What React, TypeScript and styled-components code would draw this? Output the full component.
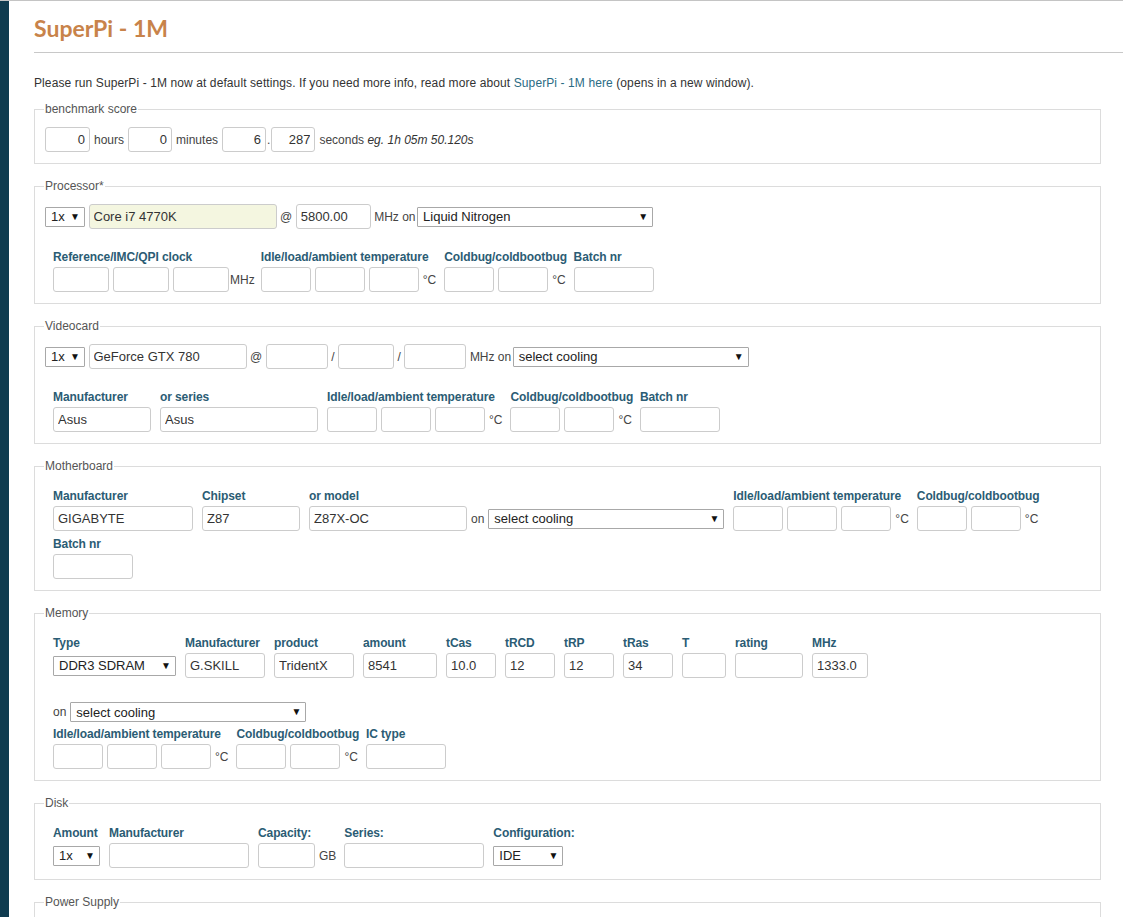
import React from 'react';
import styled, { createGlobalStyle } from 'styled-components';

const GlobalStyle = createGlobalStyle`
  html, body { margin: 0; padding: 0; background: #fff; }
  body {
    font-family: "Liberation Sans", Arial, sans-serif;
    font-size: 12px;
    color: #333;
  }
  * { box-sizing: border-box; }
`;

const Page = styled.div`
  display: flex;
  min-height: 917px;
  border-top: 1px solid #c4c4c4;
`;

const SideBar = styled.div`
  flex: 0 0 9px;
  background: #0f3b4f;
`;

const Main = styled.main`
  flex: 1;
  min-width: 0;
  padding-left: 25px;
`;

const Title = styled.h1`
  margin: 0;
  padding: 14px 0 11px;
  font-family: Lato, "Open Sans", sans-serif;
  font-weight: 700;
  font-size: 23px;
  line-height: 26px;
  color: #c8834a;
  border-bottom: 1px solid #c8c8c8;
`;

const Content = styled.div`
  margin-right: 22px;
`;

const Intro = styled.p`
  margin: 22px 0 11px;
  font-size: 12px;
  line-height: 16px;
  letter-spacing: 0.1px;
  color: #333;
`;

const Link = styled.a`
  color: #2a6b84;
  text-decoration: none;
`;

const Fieldset = styled.fieldset<{ $minH?: number }>`
  margin: 0 0 15px;
  padding: 11px 10px 11px;
  border: 1px solid #dcdcdc;
  min-width: 0;
  min-height: ${(p) => p.$minH ?? 0}px;
`;

const Legend = styled.legend`
  margin-left: -1px;
  padding: 0 1px;
  font-size: 12px;
  line-height: 14px;
  color: #555;
`;

const InlineRow = styled.div<{ $indent?: number; $mt?: number; $h?: number; $gap?: number }>`
  display: flex;
  align-items: center;
  gap: ${(p) => p.$gap ?? 3.5}px;
  height: ${(p) => p.$h ?? 25}px;
  padding-left: ${(p) => p.$indent ?? 0}px;
  margin-top: ${(p) => p.$mt ?? 0}px;
`;

const FieldRow = styled.div<{ $mt?: number }>`
  display: flex;
  align-items: flex-start;
  gap: 9px;
  padding-left: 8px;
  margin-top: ${(p) => p.$mt ?? 5}px;
`;

const Field = styled.div`
  display: flex;
  flex-direction: column;
`;

const Label = styled.label`
  display: block;
  width: 0;
  overflow: visible;
  min-height: 15px;
  margin-bottom: 2px;
  font-weight: 700;
  font-size: 12px;
  line-height: 15px;
  letter-spacing: -0.1px;
  color: #2b5c74;
  white-space: nowrap;
`;

const Controls = styled.div`
  display: flex;
  align-items: center;
  gap: 4px;
  height: 25px;
`;

const TextInput = styled.input<{ $w: number; $right?: boolean; $tint?: boolean }>`
  width: ${(p) => p.$w}px;
  height: 25px;
  margin: 0;
  padding: 0 4px;
  border: 1px solid #cccccc;
  border-radius: 3px;
  background: ${(p) => (p.$tint ? '#f4f6e0' : '#fff')};
  font-family: "Liberation Sans", Arial, sans-serif;
  font-size: 13px;
  color: #333;
  text-align: ${(p) => (p.$right ? 'right' : 'left')};
  outline: none;
`;

const SelectBox = styled.div<{ $w: number }>`
  display: flex;
  align-items: center;
  justify-content: space-between;
  width: ${(p) => p.$w}px;
  height: 20px;
  padding: 0 4px 0 5px;
  border: 1px solid #a8a8a8;
  border-radius: 1px;
  background: #fff;
  font-size: 13px;
  color: #222;
  white-space: nowrap;
  overflow: hidden;
`;

const Arrow = styled.span`
  font-size: 10px;
  color: #111;
  line-height: 1;
`;

const Text = styled.span<{ $tight?: boolean }>`
  font-size: 12px;
  color: #444;
  white-space: nowrap;
  margin-right: ${(p) => (p.$tight ? -2 : 0)}px;
`;

const Dot = styled.span`
  font-size: 12px;
  color: #444;
  margin: 0 -3px;
`;

const Unit = styled.span<{ $pull?: boolean }>`
  font-size: 12px;
  color: #444;
  white-space: nowrap;
  margin-left: ${(p) => (p.$pull ? -3 : 0)}px;
  margin-right: ${(p) => (p.$pull ? -3 : -1)}px;
`;

const Hint = styled.em`
  font-style: italic;
  color: #333;
`;

const Select = ({ w, value }: { w: number; value: string }) => (
  <SelectBox $w={w} role="combobox">
    <span>{value}</span>
    <Arrow>▼</Arrow>
  </SelectBox>
);

const Inputs = ({ n, w }: { n: number; w: number }) => (
  <>
    {Array.from({ length: n }).map((_, i) => (
      <TextInput key={i} $w={w} defaultValue="" />
    ))}
  </>
);

const TempField = () => (
  <Field>
    <Label>Idle/load/ambient temperature</Label>
    <Controls>
      <Inputs n={3} w={50} />
      <Unit>°C</Unit>
    </Controls>
  </Field>
);

const ColdbugField = () => (
  <Field>
    <Label>Coldbug/coldbootbug</Label>
    <Controls>
      <Inputs n={2} w={50} />
      <Unit>°C</Unit>
    </Controls>
  </Field>
);

const SimpleField = ({ label, w, value }: { label: string; w: number; value?: string }) => (
  <Field>
    <Label>{label}</Label>
    <Controls>
      <TextInput $w={w} defaultValue={value ?? ''} />
    </Controls>
  </Field>
);

export default function App() {
  return (
    <>
      <GlobalStyle />
      <Page>
        <SideBar />
        <Main>
          <Title>SuperPi - 1M</Title>
          <Content>
            <Intro>
              Please run SuperPi - 1M now at default settings. If you need more info, read more about{' '}
              <Link href="#">SuperPi - 1M here</Link> (opens in a new window).
            </Intro>

            <Fieldset>
              <Legend>benchmark score</Legend>
              <InlineRow $gap={4}>
                <TextInput $w={45} $right defaultValue="0" />
                <Text>hours</Text>
                <TextInput $w={44} $right defaultValue="0" />
                <Text>minutes</Text>
                <TextInput $w={44} $right defaultValue="6" />
                <Dot>.</Dot>
                <TextInput $w={44} $right defaultValue="287" />
                <Text>
                  seconds <Hint>eg. 1h 05m 50.120s</Hint>
                </Text>
              </InlineRow>
            </Fieldset>

            <Fieldset>
              <Legend>Processor*</Legend>
              <InlineRow>
                <Select w={40} value="1x" />
                <TextInput $w={188} $tint defaultValue="Core i7 4770K" />
                <Text>@</Text>
                <TextInput $w={75} defaultValue="5800.00" />
                <Text $tight>MHz on</Text>
                <Select w={236} value="Liquid Nitrogen" />
              </InlineRow>
              <FieldRow $mt={21}>
                <Field>
                  <Label>Reference/IMC/QPI clock</Label>
                  <Controls>
                    <Inputs n={3} w={56} />
                    <Unit $pull>MHz</Unit>
                  </Controls>
                </Field>
                <TempField />
                <ColdbugField />
                <SimpleField label="Batch nr" w={80} />
              </FieldRow>
            </Fieldset>

            <Fieldset>
              <Legend>Videocard</Legend>
              <InlineRow>
                <Select w={40} value="1x" />
                <TextInput $w={158} defaultValue="GeForce GTX 780" />
                <Text>@</Text>
                <TextInput $w={62} />
                <Text>/</Text>
                <TextInput $w={56} />
                <Text>/</Text>
                <TextInput $w={62} />
                <Text $tight>MHz on</Text>
                <Select w={236} value="select cooling" />
              </InlineRow>
              <FieldRow $mt={21}>
                <SimpleField label="Manufacturer" w={98} value="Asus" />
                <SimpleField label="or series" w={158} value="Asus" />
                <TempField />
                <ColdbugField />
                <SimpleField label="Batch nr" w={80} />
              </FieldRow>
            </Fieldset>

            <Fieldset>
              <Legend>Motherboard</Legend>
              <FieldRow>
                <SimpleField label="Manufacturer" w={140} value="GIGABYTE" />
                <SimpleField label="Chipset" w={98} value="Z87" />
                <Field>
                  <Label>or model</Label>
                  <Controls>
                    <TextInput $w={158} defaultValue="Z87X-OC" />
                    <Text>on</Text>
                    <Select w={236} value="select cooling" />
                  </Controls>
                </Field>
                <TempField />
                <ColdbugField />
              </FieldRow>
              <FieldRow $mt={6}>
                <SimpleField label="Batch nr" w={80} />
              </FieldRow>
            </Fieldset>

            <Fieldset>
              <Legend>Memory</Legend>
              <FieldRow>
                <Field>
                  <Label>Type</Label>
                  <Controls>
                    <Select w={123} value="DDR3 SDRAM" />
                  </Controls>
                </Field>
                <SimpleField label="Manufacturer" w={80} value="G.SKILL" />
                <SimpleField label="product" w={80} value="TridentX" />
                <SimpleField label="amount" w={74} value="8541" />
                <SimpleField label="tCas" w={50} value="10.0" />
                <SimpleField label="tRCD" w={50} value="12" />
                <SimpleField label="tRP" w={50} value="12" />
                <SimpleField label="tRas" w={50} value="34" />
                <SimpleField label="T" w={44} />
                <SimpleField label="rating" w={68} />
                <SimpleField label="MHz" w={56} value="1333.0" />
              </FieldRow>
              <InlineRow $indent={8} $mt={24} $h={20} $gap={4}>
                <Text>on</Text>
                <Select w={236} value="select cooling" />
              </InlineRow>
              <FieldRow>
                <TempField />
                <ColdbugField />
                <SimpleField label="IC type" w={80} />
              </FieldRow>
            </Fieldset>

            <Fieldset>
              <Legend>Disk</Legend>
              <FieldRow>
                <Field>
                  <Label>Amount</Label>
                  <Controls>
                    <Select w={47} value="1x" />
                  </Controls>
                </Field>
                <SimpleField label="Manufacturer" w={140} />
                <Field>
                  <Label>Capacity:</Label>
                  <Controls>
                    <TextInput $w={57} />
                    <Unit>GB</Unit>
                  </Controls>
                </Field>
                <SimpleField label="Series:" w={140} />
                <Field>
                  <Label>Configuration:</Label>
                  <Controls>
                    <Select w={70} value="IDE" />
                  </Controls>
                </Field>
              </FieldRow>
            </Fieldset>

            <Fieldset $minH={60}>
              <Legend>Power Supply</Legend>
            </Fieldset>
          </Content>
        </Main>
      </Page>
    </>
  );
}
